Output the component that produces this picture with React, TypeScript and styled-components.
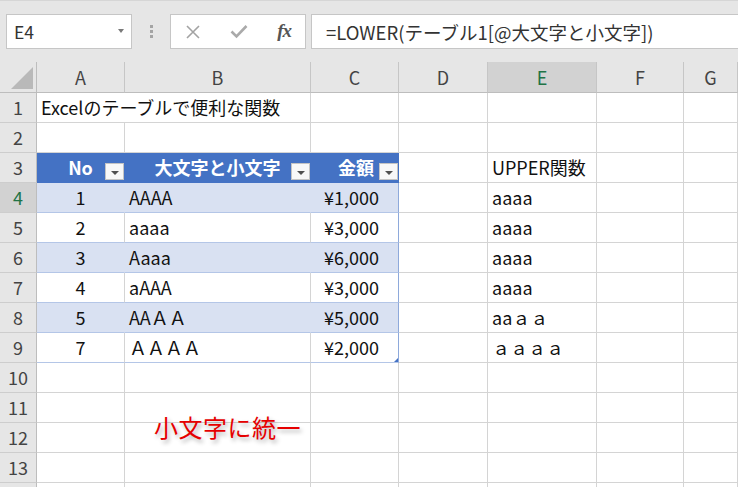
import React from 'react';
import styled, { createGlobalStyle } from 'styled-components';

const GlobalStyle = createGlobalStyle`
  html, body {
    margin: 0;
    padding: 0;
    background: #fff;
  }
  body {
    font-family: "Noto Sans CJK JP", "Noto Sans", sans-serif;
    overflow: hidden;
  }
`;

const Page = styled.div`
  position: relative;
  width: 738px;
  height: 487px;
  overflow: hidden;
  background: #fff;
`;

/* ---------- formula bar ---------- */

const FormulaBar = styled.div`
  height: 62px;
  box-sizing: border-box;
  background: #e6e6e6;
  border-top: 1px solid #d6d6d6;
  display: flex;
  align-items: flex-start;
  padding: 13px 0 0 6px;
`;

const Box = styled.div`
  height: 35px;
  box-sizing: border-box;
  background: #fff;
  border: 1px solid #c6c6c6;
  display: flex;
  align-items: center;
`;

const NameBox = styled(Box)`
  width: 126px;
  justify-content: space-between;
  padding: 0 7px 0 7px;
  font-size: 17.5px;
  color: #333;
`;

const DropArrow = styled.span`
  width: 0;
  height: 0;
  border-left: 3.5px solid transparent;
  border-right: 3.5px solid transparent;
  border-top: 4px solid #7a7a7a;
  margin-top: -2px;
`;

const Grip = styled.div`
  width: 38px;
  height: 35px;
  display: flex;
  flex-direction: column;
  align-items: center;
  justify-content: center;
  gap: 2px;

  span {
    width: 3px;
    height: 3px;
    background: #a4a4a4;
  }
`;

const ButtonsBox = styled(Box)`
  width: 136px;
  justify-content: space-between;
  padding: 0 14px 0 15px;
`;

const Fx = styled.span`
  font-family: "Liberation Serif", "DejaVu Serif", serif;
  font-style: italic;
  font-weight: bold;
  font-size: 19px;
  color: #555;
  letter-spacing: -1px;
  margin-top: -2px;
`;

const FormulaInput = styled(Box)`
  flex: 1;
  margin-left: 5px;
  border-right: none;
  padding-left: 14px;
  font-size: 18.5px;
  color: #333;
  white-space: nowrap;
`;

/* ---------- sheet grid ---------- */

const Sheet = styled.div`
  display: grid;
  grid-template-columns: 37px 88px 186px 88px 89px 109px 87px 1fr;
  grid-template-rows: 31px repeat(14, 30px);
`;

const HeadBase = styled.div<{ $active?: boolean }>`
  box-sizing: border-box;
  display: flex;
  align-items: center;
  justify-content: center;
  font-size: 18px;
  line-height: 29px;
  background: ${p => (p.$active ? '#d2d2d2' : '#e6e6e6')};
  color: ${p => (p.$active ? '#217346' : '#444')};
`;

const Corner = styled(HeadBase)`
  position: relative;
  border-right: 1px solid #bdbdbd;
  border-bottom: 1px solid #bdbdbd;

  svg {
    position: absolute;
    right: 3px;
    bottom: 3px;
  }
`;

const ColHead = styled(HeadBase)`
  border-right: 1px solid #c6c6c6;
  border-bottom: 1px solid #bdbdbd;
  padding-top: 1px;
`;

const RowHead = styled(HeadBase)`
  border-right: 1px solid #bdbdbd;
  border-bottom: 1px solid #cdcdcd;
`;

type Kind = 'grid' | 'head' | 'band' | 'plain';

const fill: Record<Kind, string> = {
  grid: '#fff',
  head: '#4472c4',
  band: '#d9e1f2',
  plain: '#fff',
};

const Cell = styled.div<{
  $kind: Kind;
  $align?: 'left' | 'center' | 'right';
  $edge?: boolean;
  $span?: number;
}>`
  position: relative;
  box-sizing: border-box;
  min-width: 0;
  display: flex;
  align-items: center;
  justify-content: ${p =>
    p.$align === 'center' ? 'center' : p.$align === 'right' ? 'flex-end' : 'flex-start'};
  padding: 0 ${p => (p.$align === 'right' ? '19px' : '4px')} 0 4px;
  grid-column: span ${p => p.$span ?? 1};
  white-space: nowrap;
  font-size: 18px;
  line-height: 29px;
  color: ${p => (p.$kind === 'head' ? '#fff' : '#111')};
  font-weight: ${p => (p.$kind === 'head' ? 'bold' : 'normal')};
  background: ${p => fill[p.$kind]};
  border-right: 1px solid
    ${p =>
      p.$edge && p.$kind !== 'grid'
        ? p.$kind === 'head'
          ? '#4472c4'
          : '#8ea9db'
        : p.$kind === 'head' || p.$kind === 'band'
        ? fill[p.$kind]
        : '#d4d4d4'};
  border-bottom: 1px solid
    ${p => (p.$kind === 'head' ? '#4472c4' : p.$kind === 'grid' ? '#d4d4d4' : '#b4c6e7')};
`;

const FilterButton = styled.span`
  position: absolute;
  right: 0;
  bottom: 2px;
  width: 19px;
  height: 17px;
  box-sizing: border-box;
  background: #f8f8f8;
  border: 1px solid #c4c4c4;
  display: flex;
  align-items: center;
  justify-content: center;

  &::after {
    content: '';
    width: 0;
    height: 0;
    margin-top: 2px;
    border-left: 4px solid transparent;
    border-right: 4px solid transparent;
    border-top: 4px solid #505050;
  }
`;

const ResizeHandle = styled.span`
  position: absolute;
  right: 0;
  bottom: 0;
  width: 0;
  height: 0;
  border-left: 4px solid transparent;
  border-bottom: 4px solid #4472c4;
`;

const Note = styled.div`
  position: absolute;
  left: 154px;
  top: 412px;
  font-size: 24px;
  line-height: 30px;
  color: #e60000;
  letter-spacing: 0.5px;
  text-shadow: 2px 3px 4px rgba(0, 0, 0, 0.3);
  white-space: nowrap;
`;

/* ---------- data ---------- */

const COLS = ['A', 'B', 'C', 'D', 'E', 'F', 'G'];

const tableRows = [
  ['1', 'AAAA', '¥1,000', 'aaaa'],
  ['2', 'aaaa', '¥3,000', 'aaaa'],
  ['3', 'Aaaa', '¥6,000', 'aaaa'],
  ['4', 'aAAA', '¥3,000', 'aaaa'],
  ['5', 'AAＡＡ', '¥5,000', 'aaａａ'],
  ['7', 'ＡＡＡＡ', '¥2,000', 'ａａａａ'],
];

const EmptyCells = ({ count }: { count: number }) => (
  <>
    {Array.from({ length: count }, (_, i) => (
      <Cell key={i} $kind="grid" />
    ))}
  </>
);

const App = () => {
  return (
    <Page>
      <GlobalStyle />
      <FormulaBar>
        <NameBox>
          <span>E4</span>
          <DropArrow />
        </NameBox>
        <Grip>
          <span />
          <span />
          <span />
        </Grip>
        <ButtonsBox>
          <svg width="14" height="14" viewBox="0 0 14 14">
            <path d="M1 1 L13 13 M13 1 L1 13" stroke="#a3a3a3" strokeWidth="1.6" fill="none" />
          </svg>
          <svg width="18" height="15" viewBox="0 0 18 15">
            <path d="M1.5 7.5 L6.5 12.5 L16.5 2" stroke="#aaa" strokeWidth="2.6" fill="none" />
          </svg>
          <Fx>fx</Fx>
        </ButtonsBox>
        <FormulaInput>=LOWER(テーブル1[@大文字と小文字])</FormulaInput>
      </FormulaBar>

      <Sheet>
        <Corner>
          <svg width="22" height="22" viewBox="0 0 22 22">
            <path d="M22 0 L22 22 L0 22 Z" fill="#b9b9b9" />
          </svg>
        </Corner>
        {COLS.map(c => (
          <ColHead key={c} $active={c === 'E'}>
            {c}
          </ColHead>
        ))}

        <RowHead>1</RowHead>
        <Cell $kind="grid" $span={2}>Excelのテーブルで便利な関数</Cell>
        <EmptyCells count={5} />

        <RowHead>2</RowHead>
        <EmptyCells count={7} />

        <RowHead>3</RowHead>
        <Cell $kind="head" $align="center">
          No
          <FilterButton />
        </Cell>
        <Cell $kind="head" $align="center">
          大文字と小文字
          <FilterButton />
        </Cell>
        <Cell $kind="head" $align="right" $edge style={{ paddingRight: 24 }}>
          金額
          <FilterButton />
        </Cell>
        <Cell $kind="grid" />
        <Cell $kind="grid">UPPER関数</Cell>
        <EmptyCells count={2} />

        {tableRows.map(([no, text, price, lower], i) => {
          const kind: Kind = i % 2 === 0 ? 'band' : 'plain';
          const n = i + 4;
          return (
            <React.Fragment key={n}>
              <RowHead $active={n === 4}>{n}</RowHead>
              <Cell $kind={kind} $align="center">
                {no}
              </Cell>
              <Cell $kind={kind}>{text}</Cell>
              <Cell $kind={kind} $align="right" $edge>
                {price}
                {n === 9 && <ResizeHandle />}
              </Cell>
              <Cell $kind="grid" />
              <Cell $kind="grid">{lower}</Cell>
              <EmptyCells count={2} />
            </React.Fragment>
          );
        })}

        {[10, 11, 12, 13, 14].map(n => (
          <React.Fragment key={n}>
            <RowHead>{n < 14 ? n : ''}</RowHead>
            <EmptyCells count={7} />
          </React.Fragment>
        ))}
      </Sheet>

      <Note>小文字に統一</Note>
    </Page>
  );
};

export default App;
